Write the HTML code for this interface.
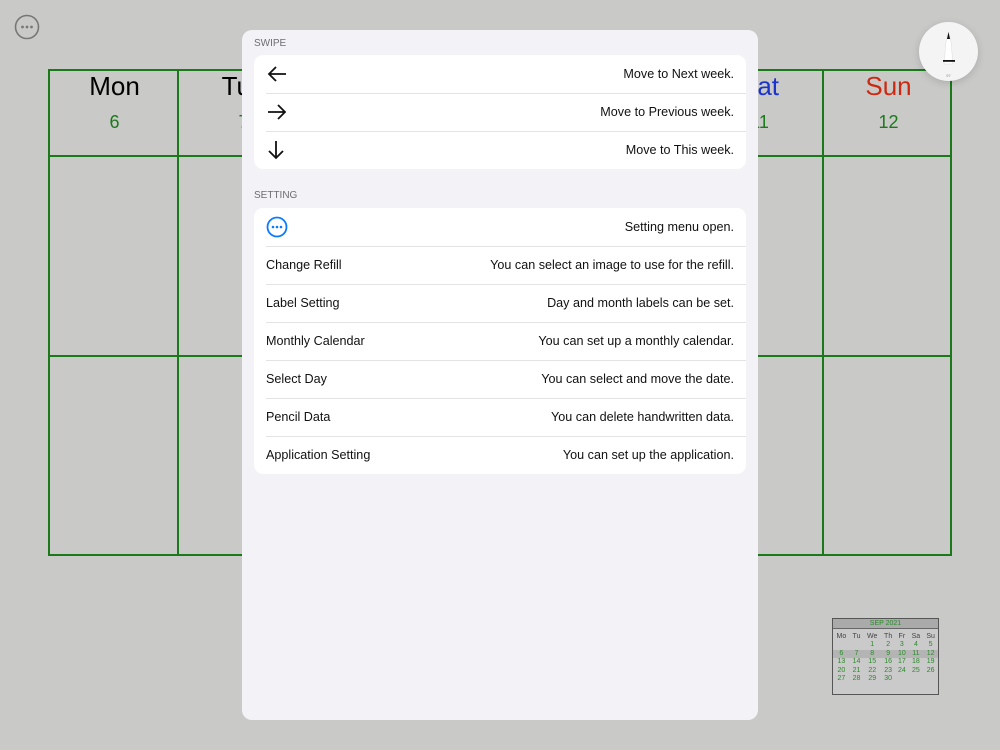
<!DOCTYPE html>
<html><head><meta charset="utf-8"><style>
*{margin:0;padding:0;box-sizing:border-box}
body{width:1000px;height:750px;background:#c9c9c8;font-family:"Liberation Sans",sans-serif;position:relative;overflow:hidden}
.grid{position:absolute;left:48px;top:69px;width:904px;height:487px;border:2px solid #1a7a1a}
.v{position:absolute;top:0;bottom:0;width:2px;background:#1a7a1a}
.h{position:absolute;left:0;right:0;height:2px;background:#1a7a1a}
.day{position:absolute;top:0;width:129px;text-align:center}
.day b{display:block;font-weight:normal;font-size:26px;margin-top:0px}
.day i{display:block;font-style:normal;font-size:18px;color:#1a7a1a;margin-top:10px}
.modal{position:absolute;left:242px;top:30px;width:516px;height:690px;background:#f2f2f7;border-radius:10px}
.sec{position:absolute;left:12px;font-size:10px;color:#6d6d72}
.card{position:absolute;left:12px;width:492px;background:#fff;border-radius:9px}
.row{height:38px;position:relative;font-size:12.6px;color:#111}
.row+.row:before{content:"";position:absolute;left:12px;right:0;top:0;height:1px;background:#e3e3e6}
.row .l{position:absolute;left:12px;top:12px}
.row .r{position:absolute;right:12px;top:12px}
.row svg{position:absolute;left:12px;top:9px}
.mini{position:absolute;left:832px;top:618px;width:107px;height:77px;border:1px solid #555;background:#cacaca;font-size:7px;color:#2a8a2a}
.mini table{width:100%;border-collapse:collapse;text-align:center;margin-top:4px}
.mini td{height:8.4px;line-height:8.4px;padding:0}
</style></head><body>
<svg style="position:absolute;left:14px;top:14px" width="26" height="26"><circle cx="13" cy="13" r="11.5" fill="none" stroke="#777" stroke-width="1.6"/><circle cx="8.5" cy="13" r="1.4" fill="#777"/><circle cx="13" cy="13" r="1.4" fill="#777"/><circle cx="17.5" cy="13" r="1.4" fill="#777"/></svg>
<div class="grid">
<div class="v" style="left:127px"></div><div class="v" style="left:256px"></div><div class="v" style="left:385px"></div><div class="v" style="left:514px"></div><div class="v" style="left:643px"></div><div class="v" style="left:772px"></div>
<div class="h" style="top:84px"></div><div class="h" style="top:284px"></div>
<div class="day" style="left:0"><b>Mon</b><i>6</i></div>
<div class="day" style="left:129px"><b>Tue</b><i>7</i></div>
<div class="day" style="left:645px"><b style="color:#1a33cc">Sat</b><i>11</i></div>
<div class="day" style="left:774px"><b style="color:#cc2a10">Sun</b><i>12</i></div>
</div>
<div style="position:absolute;left:919px;top:22px;width:59px;height:59px;border-radius:50%;background:#f4f4f4;box-shadow:0 2px 8px rgba(0,0,0,.15)">
<svg width="59" height="59"><path d="M29.5 10 L27 20 L25 42 L34 42 L32 20 Z" fill="#fff" stroke="#ddd" stroke-width=".5"/><path d="M29.5 10 L28 17 L31 17Z" fill="#111"/><rect x="24" y="38" width="12" height="1.8" fill="#111"/><text x="29.5" y="55" font-size="4" fill="#888" text-anchor="middle" font-family="Liberation Sans">97</text></svg></div>
<div class="mini"><div style="background:#aaa;border-bottom:1px solid #666;text-align:center;height:10px;line-height:10px">SEP 2021</div>
<table><tr style="color:#444"><td>Mo</td><td>Tu</td><td>We</td><td>Th</td><td>Fr</td><td>Sa</td><td>Su</td></tr>
<tr><td></td><td></td><td>1</td><td>2</td><td>3</td><td>4</td><td>5</td></tr>
<tr style="background:#b4b4b4"><td>6</td><td>7</td><td>8</td><td>9</td><td>10</td><td>11</td><td>12</td></tr>
<tr><td>13</td><td>14</td><td>15</td><td>16</td><td>17</td><td>18</td><td>19</td></tr>
<tr><td>20</td><td>21</td><td>22</td><td>23</td><td>24</td><td>25</td><td>26</td></tr>
<tr><td>27</td><td>28</td><td>29</td><td>30</td><td></td><td></td><td></td></tr></table></div>
<div class="modal">
<div class="sec" style="top:8px">SWIPE</div>
<div class="card" style="top:25px">
<div class="row"><svg width="22" height="20"><path d="M20 10H3M10 3L3 10L10 17" fill="none" stroke="#111" stroke-width="1.8"/></svg><span class="r">Move to Next week.</span></div>
<div class="row"><svg width="22" height="20"><path d="M2 10H19M12 3L19 10L12 17" fill="none" stroke="#111" stroke-width="1.8"/></svg><span class="r">Move to Previous week.</span></div>
<div class="row"><svg width="22" height="20" style="top:9px"><path d="M10 1V18M3 11L10 18L17 11" fill="none" stroke="#111" stroke-width="1.8"/></svg><span class="r">Move to This week.</span></div>
</div>
<div class="sec" style="top:160px">SETTING</div>
<div class="card" style="top:178px">
<div class="row"><svg width="22" height="22" style="top:8px"><circle cx="11" cy="11" r="9.5" fill="none" stroke="#0a7aff" stroke-width="1.8"/><circle cx="7" cy="11" r="1.3" fill="#0a7aff"/><circle cx="11" cy="11" r="1.3" fill="#0a7aff"/><circle cx="15" cy="11" r="1.3" fill="#0a7aff"/></svg><span class="r">Setting menu open.</span></div>
<div class="row"><span class="l">Change Refill</span><span class="r">You can select an image to use for the refill.</span></div>
<div class="row"><span class="l">Label Setting</span><span class="r">Day and month labels can be set.</span></div>
<div class="row"><span class="l">Monthly Calendar</span><span class="r">You can set up a monthly calendar.</span></div>
<div class="row"><span class="l">Select Day</span><span class="r">You can select and move the date.</span></div>
<div class="row"><span class="l">Pencil Data</span><span class="r">You can delete handwritten data.</span></div>
<div class="row"><span class="l">Application Setting</span><span class="r">You can set up the application.</span></div>
</div>
</div>
</body></html>
